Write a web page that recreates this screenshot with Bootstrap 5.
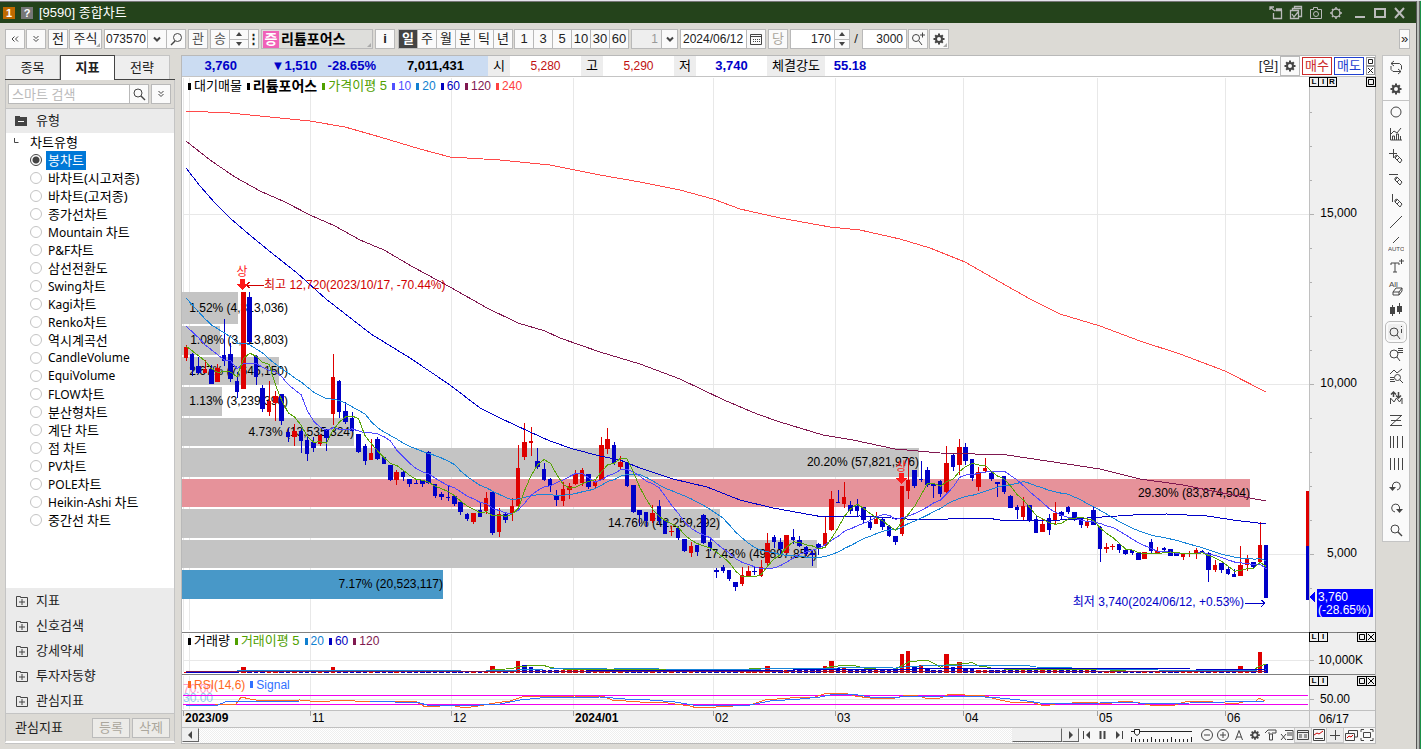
<!DOCTYPE html>
<html lang="ko">
<head>
<meta charset="utf-8">
<meta name="viewport" content="width=device-width, initial-scale=1">
<title>[9590] 종합차트</title>
<link href="https://cdn.jsdelivr.net/npm/bootstrap@5.3.0/dist/css/bootstrap.min.css" rel="stylesheet">
<style>
:root{--face:#dcdad5;--edge:#b9b9b9}
body{font-family:"Liberation Sans","Noto Sans CJK KR",sans-serif;font-size:13px;line-height:18px;color:#222;background:var(--face)}
button,input,select{font:inherit;color:inherit;border-radius:0}
svg.ico{width:16px;height:16px;fill:none;stroke:#444;stroke-width:1;display:block;flex:none}
.ico .f{fill:#444;stroke:none}
.frame{border-top:1px solid #e4e4ec;min-height:100vh;background:linear-gradient(#1a9048,#1a9048) right/1px 100% no-repeat,var(--face);padding-right:1px}
.frame-in{border-right:1px solid #666;padding-right:2px;background:#b8bcb8;min-height:calc(100vh - 1px)}
.win{border-top:1px solid #777;border-right:1px solid #555;background:var(--face);min-height:calc(100vh - 1px)}
.titlebar{background:#24431b;color:#fff;height:21px;padding:0 8px 0 3px;gap:2px}
.titlebar .num{width:12px;height:12px;font-size:11px;line-height:12px;font-weight:700;text-align:center}
.num-a{background:#c06a00}.num-b{background:#777}
.titlebar button{background:none;border:0;padding:0}
.titlebar .ico{stroke:#bbb}.titlebar .ico .f{fill:#bbb}
.toolbar{height:32px;padding:0 6px 0 5px}
.b{height:20px;min-width:20px;padding:0;border:1px solid var(--edge);background:#fafafa;display:flex;align-items:center;justify-content:center;color:#222;white-space:nowrap}
.j{margin-left:-1px}
.b.slim{min-width:0;width:11px}
.b.drop{min-width:0;width:17px;overflow:hidden}
.b.wide{width:33px}
.b.dim{color:#555}.b.off{color:#aaa69c}
.b.dark{background:#444;color:#fff;font-weight:700}
.box{height:20px;border:1px solid var(--edge);background:#fff;padding:0 3px;min-width:0}
.code{width:44px;padding:0 1px}.unit{width:31px;color:#999;background:#eee}.date{width:67px;padding:0 2px}.count{width:45px}
.g0{margin-left:1px}.g1{margin-left:2px}.g2{margin-left:3px}
.slash{width:12px;text-align:center}
.spin{width:20px;height:20px;border:1px solid var(--edge);background:#fafafa;display:flex;flex-direction:column}
.spin.small-w{width:16px}
.spin button{flex:1;border:0;padding:0;background:none;display:flex;align-items:center;justify-content:center}
.spin button+button{border-top:1px solid var(--edge)}
.up,.dn{border:3px solid transparent;width:0;height:0}
.up{border-bottom:4px solid #444;border-top:0}.dn{border-top:4px solid #444;border-bottom:0}
.name{width:112px;background:#dededb;border:1px solid var(--edge);height:20px;font-size:14px;font-weight:700;color:#000;text-align:left;padding:0 1px}
.name i{font-style:normal;background:#f062b8;color:#fff;width:16px;text-align:center;margin-right:2px;line-height:17px}
.corner{position:relative}
.corner::after{content:"";position:absolute;right:1px;bottom:1px;border:2px solid #aaa;border-left-color:transparent;border-top-color:transparent}
.per .b{width:20px}
.num12{font-size:12px}
.main{padding:0 6px 6px 5px;gap:6px}
.side{width:170px;border-bottom:1px solid #c4c4c4;flex:none}
.tabs{border-bottom:1px solid #444;height:25px;display:flex}
.tabs button{width:55px;border:1px solid #c4c4c4;border-bottom:0;border-left:0;background:#eee;height:24px;padding:0}
.tabs button:first-child{border-left:1px solid #c4c4c4}
.tabs .on{background:#fff;border:1px solid #444;border-bottom:0;height:25px;font-weight:700}
.search{height:28px;padding:4px 2px;border:solid #c4c4c4;border-width:0 1px}
.search input{width:122px}
.search input::placeholder{color:#bbb;opacity:1}
.tree{border:1px solid #c4c4c4;border-bottom:0;background:#fff;flex:1}
.head{background:#ebebeb;height:25px;padding-left:8px;gap:6px;display:flex;align-items:center}
.tree .head{height:24px}
button.head{border:0;width:100%;text-align:left}
.folders{background:#ebebeb;border:solid #c4c4c4;border-width:0 1px}
.row18{height:18px;display:flex;align-items:center;font-family:"Noto Sans","Noto Sans CJK KR",sans-serif;font-size:12px;color:#000}
.row18 .ko{font-size:13px}
.row18 label{padding:0 2px;line-height:18px;white-space:nowrap}
.row18 input{appearance:none;width:12px;height:12px;border:1px solid #c4c4c4;border-radius:50%;margin:0 4px 0 24px;flex:none}
.row18 input:checked{border-color:#444;background:radial-gradient(#444 0 3px,#fff 4px)}
.row18 input:checked+label{background:#0078d7;color:#fff}
.foot{height:30px;background:var(--face);border:1px solid #c4c4c4;border-bottom:2px solid #fff;padding:0 4px 0 9px;gap:2px}
.foot button{width:38px;height:20px;color:#aaa69c;border:1px solid #bbb;background:#ecebe8;padding:0}
.panel{border:1px solid var(--edge);min-width:0}
.quote{height:21px;border-bottom:1px solid #c4c4c4;background:#fff;white-space:nowrap}
.quote>*{height:20px;line-height:20px;text-align:center}
.quote b{font-size:13px}
.qb{background:#cbdcf2;width:306px;color:#0000c8}
.qb b{text-align:right}
.q1{width:55px}.q2{width:80px}.q3{width:59px}.q4{width:88px;color:#000}
.ql{background:#ededed;width:22px;color:#000}.qv{width:71px;font-size:12px;color:#c01010}
.ql.long{width:58px}.down{color:#0000c8}.power{width:50px}
.quote .trade{height:18px;line-height:16px;width:30px;border:1px solid;background:#fff;padding:0}
.buy{color:#cc2a2a}.sell{color:#1f3fd0}
.tiny{width:9px;height:9px;border:1px solid #999;padding:0;background:#fff;display:block}
.tiny svg{display:block;width:7px;height:7px;fill:none;stroke:#222}
.plot{position:relative;background:#fff}
.plot>svg{display:block;width:100%;height:auto}
.plot text{font-size:12px}
.legend{position:absolute;left:6px;display:flex;gap:5px;align-items:center;line-height:18px;white-space:nowrap}
.legend span{display:flex;align-items:center;gap:3px;font-size:12px}
.legend .ko{font-size:13px}
.legend .stock{font-size:14px;font-weight:700}
.legend span::before{content:"";width:3px;height:7px;background:currentColor}
.m5{color:#50a000}.m10{color:#5050ff}.m20{color:#1080d0}.m60{color:#0000c0}.m120{color:#801850}.m240{color:#ff4040}.rsi{color:#ff6820}.sig{color:#3070ff}
.keys{position:absolute;display:flex;right:0;width:66px}
.keys button{width:10px;height:10px;border:1px solid #000;background:#efefef;padding:0;margin-right:-1px;font-size:8px;line-height:8px;font-weight:700;color:#000;display:flex;justify-content:center}
.keys button svg{width:8px;height:8px;fill:none;stroke:#000}
.keys .last{margin-left:auto}
.k1{top:0}.k2{top:85.300%}.k3{top:92%}
.scroll{height:15px;background:#f7f7f7}
.raised{border:1px solid;border-color:#eee #666 #666 #eee;background:#efefef;height:14px;padding:0;overflow:hidden}
.arrow{width:17px}.thumb{width:50px}
.track{background:repeating-conic-gradient(#eee 0 25%,#fff 0 50%) 0 0/2px 2px}
.btm .ico{width:16px;height:14px}
.btm button{padding:0;border:0;background:none;width:16px;height:14px}
.btm button.on{outline:1px solid #c8c8c8;background:#ececec}
.rail{width:28px;border:1px solid #c4c4c4;background:#fafafa;align-self:flex-start;flex:none}
.rail button{width:100%;height:22px;border:0;background:none;padding:0;display:flex;align-items:center;justify-content:center}
.rail button.on .ico{outline:1px solid #bbb;outline-offset:2px;border-radius:2px;background:#eee}
.rail button.sep{height:23px;border-bottom:1px solid #c4c4c4}
</style>
<script src="https://cdn.jsdelivr.net/npm/bootstrap@5.3.0/dist/js/bootstrap.bundle.min.js"></script>
</head>
<body>
<svg width="0" height="0" class="position-absolute" aria-hidden="true">
<symbol id="gear" viewBox="0 0 16 16"><circle cx="8" cy="8" r="3" stroke-width="2"/><path stroke-width="2" d="M8 2.500v2M8 11.500v2M2.500 8h2M11.500 8h2M4.200 4.200l1.400 1.400M10.400 10.400l1.400 1.400M11.800 4.200l-1.400 1.400M5.600 10.400l-1.400 1.400"/></symbol>
<symbol id="mag" viewBox="0 0 16 16"><circle cx="7" cy="7" r="4"/><path d="M10 10l4 4" stroke-width="1.500"/></symbol>
<symbol id="pen" viewBox="0 0 16 16"><path d="M7 8l2-1 5 5-2 3-5-5zM7 10l3-3M9 12l3-3"/></symbol>
<symbol id="fold" viewBox="0 0 16 16"><path d="M2.500 3.500h4v1h7v9h-11zM5 9h6M8 6v6"/></symbol>
<symbol id="dd" viewBox="0 0 16 16"><path d="M5.500 5L8 7.500 10.500 5M5.500 8L8 10.500 10.500 8"/></symbol>
<symbol id="chev" viewBox="0 0 16 16"><path d="M5 6.500l3 3 3-3" stroke-width="2"/></symbol>
</svg>
<div class="frame"><div class="frame-in"><div class="win d-flex flex-column">
<header class="titlebar d-flex align-items-center">
 <span class="num num-a">1</span><span class="num num-b ms-1">?</span><span class="ms-1">[9590] 종합차트</span>
 <div class="ms-auto d-flex gap-1">
 <button aria-label="분리"><svg class="ico" viewBox="0 0 16 16"><path d="M2 2l5 4M2 5V2h4M5.500 8v5.500h8v-8h-6M8 4h6" stroke-width="1.300"/></svg></button>
 <button aria-label="복사"><svg class="ico" viewBox="0 0 16 16"><path d="M2.500 5.500h8v8h-8zM4.500 5V3.500h9v8H11M6.500 3V1.500h7V4M4 9l2 3 4-5" stroke-width="1.300"/></svg></button>
 <button aria-label="캡처"><svg class="ico" viewBox="0 0 16 16"><path d="M2.500 4.500h3v-2h4v2h4v9h-11z"/><circle cx="8" cy="9" r="2.500"/></svg></button>
 <button class="me-1" aria-label="설정"><svg class="ico" viewBox="0 0 16 16"><circle cx="8" cy="8" r="4" stroke-width="1.500"/><path stroke-width="1.500" d="M8 2v2M8 12v2M2 8h2M12 8h2M4 4l1 1M11 11l1 1M12 4l-1 1M5 11l-1 1"/></svg></button>
 <button aria-label="최소화"><svg class="ico" viewBox="0 0 16 16"><path d="M3 12h10" stroke-width="2"/></svg></button>
 <button aria-label="최대화"><svg class="ico" viewBox="0 0 16 16"><path d="M3 4h10v8H3z" stroke-width="2"/></svg></button>
 <button aria-label="닫기"><svg class="ico" viewBox="0 0 16 16"><path d="M3 3l9 10M12 3L3 13" stroke-width="2"/></svg></button>
 </div>
</header>
<div class="toolbar d-flex align-items-center">
 <button class="b" aria-label="이전"><svg class="ico" viewBox="0 0 16 16"><path d="M7.500 5.500L5 8l2.500 2.500M11 5.500L8.500 8l2.500 2.500"/></svg></button>
 <button class="b g0" aria-label="펼치기"><svg class="ico"><use href="#dd"/></svg></button>
 <button class="b g1">전</button>
 <button class="b g0 corner wide">주식</button>
 <input class="box g1 num12 code" value="073570" aria-label="종목코드"><button class="b j" aria-label="목록"><svg class="ico"><use href="#chev"/></svg></button><button class="b j" aria-label="검색"><svg class="ico" viewBox="0 0 16 16"><circle cx="9.500" cy="6.500" r="4"/><path d="M7 10l-4 4" stroke-width="1.500"/></svg></button>
 <button class="b g1 dim">관</button>
 <button class="b g1 dim">송</button>
 <div class="spin j"><button aria-label="이전 종목"><i class="up"></i></button><button aria-label="다음 종목"><i class="dn"></i></button></div>
 <button class="b j slim fw-bold">⋮</button>
 <button class="name d-flex align-items-center g1 corner"><i>증</i>리튬포어스</button>
 <button class="b g1 fw-bold">i</button>
 <div class="per d-flex g2"><button class="b dark">일</button><button class="b j">주</button><button class="b j">월</button><button class="b j">분</button><button class="b j">틱</button><button class="b j">년</button></div>
 <div class="per d-flex g0"><button class="b">1</button><button class="b j">3</button><button class="b j">5</button><button class="b j">10</button><button class="b j">30</button><button class="b j">60</button></div>
 <input class="box g1 text-end num12 unit" value="1" aria-label="주기"><button class="b j drop" aria-label="주기 선택"><svg class="ico"><use href="#chev"/></svg></button>
 <input class="box g1 num12 date" value="2024/06/12" aria-label="날짜"><button class="b j" aria-label="달력"><svg class="ico" viewBox="0 0 16 16"><path d="M2.500 3.500h11v10h-11zM3 5.500h10"/><path stroke-dasharray="1 1" d="M5 8.500h7M5 10.500h7"/></svg></button>
 <button class="b g1 off">당</button>
 <input class="box g1 text-end num12 count" value="170" aria-label="표시 봉수"><div class="spin small-w j"><button aria-label="늘리기"><i class="up"></i></button><button aria-label="줄이기"><i class="dn"></i></button></div>
 <span class="slash">/</span>
 <input class="box text-end num12 count" value="3000" aria-label="전체 봉수">
 <button class="b g0" aria-label="확대"><svg class="ico" viewBox="0 0 16 16"><circle cx="6" cy="7" r="3.500"/><path d="M9 10l3 4M10 4h5M12.500 1.500v5"/></svg></button>
 <button class="b g0 corner" aria-label="설정"><svg class="ico"><use href="#gear"/></svg></button>
 <button class="b ms-auto slim" aria-label="더 보기">»</button>
</div>
<main class="main d-flex flex-grow-1">
 <aside class="side d-flex flex-column">
  <div class="tabs"><button>종목</button><button class="on">지표</button><button>전략</button></div>
  <div class="search d-flex"><input class="box" placeholder="스마트 검색" aria-label="스마트 검색"><button class="b j" aria-label="검색"><svg class="ico"><use href="#mag"/></svg></button><button class="b g1" aria-label="펼치기"><svg class="ico"><use href="#dd"/></svg></button></div>
  <div class="tree">
   <button class="head"><svg class="ico" viewBox="0 0 16 16"><path class="f" d="M1 3h5v1h7v9H1z"/><path d="M4 8.500h6" stroke="#fff"/></svg>유형</button>
   <div class="row18"><svg class="ico" viewBox="0 0 16 16"><path d="M8.500 4v4.500h4"/></svg><span class="ko ms-2">차트유형</span></div>
   <div id="types"></div>
  </div>
  <div id="folders" class="folders"></div>
  <div class="foot d-flex align-items-center"><span class="me-auto">관심지표</span><button disabled>등록</button><button disabled>삭제</button></div>
 </aside>
 <section class="panel flex-grow-1">
  <div class="quote d-flex align-items-center">
   <div class="qb d-flex"><b class="q1">3,760</b><b class="q2">▼1,510</b><b class="q3">-28.65%</b><b class="q4">7,011,431</b></div>
   <span class="ql">시</span><span class="qv">5,280</span><span class="ql">고</span><span class="qv">5,290</span><span class="ql">저</span><b class="qv down">3,740</b><span class="ql long">체결강도</span><b class="down power">55.18</b>
   <div class="ms-auto d-flex align-items-center" style="gap:2px"><span>[일]</span><button class="b" aria-label="설정"><svg class="ico"><use href="#gear"/></svg></button><button class="trade buy">매수</button><button class="trade sell">매도</button><div><button class="tiny" aria-label="최대화"><svg viewBox="0 0 7 7"><path d="M1.500 1.500h4v4h-4z"/></svg></button><button class="tiny" aria-label="닫기"><svg viewBox="0 0 7 7"><path d="M1 1l5 5M6 1L1 6"/></svg></button></div></div>
  </div>
  <div class="plot">
   <svg id="chart" viewBox="182 77 1193 651" shape-rendering="crispEdges" role="img" aria-label="리튬포어스 일봉 차트"></svg>
   <div class="legend k1"><span class="ko text-black">대기매물</span><span class="stock text-black">리튬포어스</span><span class="ko m5">가격이평 5</span><span class="m10">10</span><span class="m20">20</span><span class="m60">60</span><span class="m120">120</span><span class="m240">240</span></div>
   <div class="legend k2"><span class="ko text-black">거래량</span><span class="ko m5">거래이평 5</span><span class="m20">20</span><span class="m60">60</span><span class="m120">120</span></div>
   <div class="legend k3"><span class="rsi">RSI(14,6)</span><span class="sig">Signal</span></div>
   <div class="keys k1"><button>L</button><button>I</button><button>R</button><button class="last" aria-label="최대화"><svg viewBox="0 0 8 8"><path d="M1.500 1.500h5v5h-5z"/></svg></button></div>
   <div class="keys k2"><button>L</button><button>I</button><button class="last" aria-label="최대화"><svg viewBox="0 0 8 8"><path d="M1.500 1.500h5v5h-5z"/></svg></button><button aria-label="닫기"><svg viewBox="0 0 8 8"><path d="M1 1l6 6M7 1L1 7"/></svg></button></div>
   <div class="keys k3"><button>L</button><button>I</button><button class="last" aria-label="최대화"><svg viewBox="0 0 8 8"><path d="M1.500 1.500h5v5h-5z"/></svg></button><button aria-label="닫기"><svg viewBox="0 0 8 8"><path d="M1 1l6 6M7 1L1 7"/></svg></button></div>
  </div>
  <div class="scroll d-flex">
   <button class="raised arrow" aria-label="왼쪽"><svg class="ico" viewBox="0 0 16 16"><path class="f" d="M9 2v8L5 6z"/></svg></button>
   <div class="track flex-grow-1 d-flex justify-content-end"><div class="raised thumb"></div></div>
   <button class="raised arrow" aria-label="오른쪽"><svg class="ico" viewBox="0 0 16 16"><path class="f" d="M6 2v8l4-4z"/></svg></button>
   <div class="btm d-flex" id="btm"></div>
  </div>
 </section>
 <nav class="rail" id="rail" aria-label="그리기 도구"></nav>
</main>
</div></div></div>
<script>
const $=id=>document.getElementById(id);
$('types').innerHTML=['봉차트','바차트(시고저종)','바차트(고저종)','종가선차트','Mountain 차트','P&amp;F차트','삼선전환도','Swing차트','Kagi차트','Renko차트','역시계곡선','CandleVolume','EquiVolume','FLOW차트','분산형차트','계단 차트','점 차트','PV차트','POLE차트','Heikin-Ashi 차트','중간선 차트']
 .map((t,i)=>`<div class="row18"><input type="radio" name="type" id="t${i}"${i?'':' checked'}><label for="t${i}">${t.replace(/[가-힣()]+/g,'<span class="ko">$&</span>')}</label></div>`).join('');
$('folders').innerHTML=['지표','신호검색','강세약세','투자자동향','관심지표'].map(t=>`<button class="head"><svg class="ico"><use href="#fold"/></svg>${t}</button>`).join('');

const ic=(d,vb='0 0 16 16')=>`<svg class="ico" viewBox="${vb}">${d}</svg>`;
const p=d=>`<path d="${d}"/>`, pen='<use href="#pen"/>', mg='<use href="#mag"/>';
const rail=[
 ['종목 전환',p('M3 4.500h8.500l2 2v4M6 2L3 4.500 6 7M13 12.500H5l-2-2V7M10 10l3 2.500-3 2.500')],
 ['설정','<use href="#gear"/>','sep'],
 ['원','<circle cx="8" cy="8" r="5"/>'],
 ['지표',p('M2.500 2v12H14M4.500 14v-4h2v4M8.500 14V8h2v6M12.500 14v-4M3 8l3-3 3 2 4-5')],
 ['십자선',pen+p('M5.500 1v9M1 5.500h8')],
 ['수평선',pen+p('M1 4.500h9')],
 ['수직선',pen+p('M4.500 2v8')],
 ['추세선',p('M2 14L14 2')],
 ['자동 추세선',p('M5 7L11 1')+'<text x="0" y="15" fill="#444" stroke="none" font-size="6">AUTO</text>'],
 ['문자','<path d="M3 5h8v2M3 7V5M7 5v9M5 14h4M11 3h5M13.500 1v5"/>'],
 ['모두 지우기','<text x="1" y="7" fill="#444" stroke="none" font-size="8">All</text>'+p('M5 12l3-4h6l-3 4v3H5zM5 12h6M14 8v3l-3 4')],
 ['봉',p('M4.500 3v11M11.500 1v11')+'<path class="f" d="M2 5h5v7H2zM9 4h5v6H9z"/>'],
 ['정보 조회','<circle cx="6" cy="8" r="4"/>'+p('M9 11l3 4M13.500 5v4M13.500 2v1'),'on'],
 ['목록 조회','<circle cx="6" cy="8" r="4"/>'+p('M9 11l3 4M10 2.500h5M10 4.500h5M10 6.500h5')],
 ['차트 조회',p('M2 6l4-4 3 3 5-4M2 9.500h4M2 11.500h4M2 13.500h5')+'<circle cx="9.500" cy="9.500" r="3"/>'+p('M12 12l3 3')],
 ['고저',p('M2.500 14V8l3.500 4 2.500-4 3 4 2.500-4v6')+'<path stroke-width="1.500" d="M5.500 7V2M3 4.500L5.500 2 8 4.500M10.500 2v6M8 5.500L10.500 8 13 5.500"/>'],
 ['파동',p('M2 3.500h12M3 8.500h10M2 13.500h12M13 4L3 13')],
 ['시간대 1',p('M2.500 2v12M5.500 2v12M9.500 2v12M14.500 2v12')],
 ['시간대 2',p('M2.500 2v12M6.500 2v12M10.500 2v12M14.500 2v12')],
 ['되돌리기',p('M4.500 10.500V7A4 4 0 1 1 9 12')+'<path class="f" d="M1 9h7l-3.500 4z"/>'],
 ['다시 실행',p('M7 12a4 4 0 1 1 4.500-5v3')+'<path class="f" d="M8 9h7l-3.500 4z"/>'],
 ['확대',mg]];
$('rail').innerHTML=rail.map(r=>`<button aria-label="${r[0]}" class="${r[2]||''}">${ic(r[1])}</button>`).join('');
const ctl=[['처음',p('M4.500 3v8')+'<path class="f" d="M11 3v8L7 7z"/>'],['정지','<path d="M5.500 3v8M9.500 3v8" stroke-width="2"/>'],['끝',p('M11.500 3v8')+'<path class="f" d="M5 3v8l4-4z"/>']];
const tools=[['축소','<circle cx="8" cy="7" r="5.500"/>'+p('M5 7h6')],['확대','<circle cx="8" cy="7" r="5.500"/>'+p('M5 7h6M8 4v6')],['글자',p('M4.500 12L8 2.500l3.500 9.500M6 9h4')],['설정','<use href="#gear" height="14"/>'],['도구',p('M2 5l3-3h8v3H9M5 5h2M6.500 6h3v6h-3z')],['엑셀',p('M6 2.500h8v9H8M8 5h5M8 7h5M2 6l5 6M7 6l-5 6')],['표',p('M2.500 2.500h11v9h-11zM3 4.500h10M4 7h3M4 9h3M9 7h3M9 9h3'),'on'],['차트',p('M2.500 1.500h11v11h-11zM4 10.500h8')+'<path stroke="#c00" d="M3 7l3-2 2 1 4-3"/>'],['십자',p('M8.500 2v10M3 7.500h10'),'on'],['겹침',p('M5.500 5V2.500h9V9H12M2.500 5.500h9v7h-9z')+'<path stroke="#c00" d="M4 10l2-2 2 1 2-2"/>'],['전체',p('M2 4V1.500h3M11 1.500h3V4M14 10v2.500h-3M5 12.500H2V10M4.500 4.500h7v5h-7z')]];
const bt=a=>a.map(r=>`<button aria-label="${r[0]}" class="${r[2]||''}">${ic(r[1],'0 0 16 14')}</button>`).join('');
let ruler='<svg class="d-block" viewBox="0 0 64 14" width="64" height="14" fill="none" stroke="#222"><path d="M0 3.500h61"/><path d="M3.500 1.500h5v4l-2.500 2-2.500-2z" fill="#fff"/>';
for(let i=0;i<16;i++)ruler+=`<path d="M${i*4+.5} ${i%5?11:9}v5"/>`;
$('btm').innerHTML=bt(ctl)+'<span class="mx-1">'+ruler+'</svg></span>'+bt(tools);

/* candles: direction, high, body top, body bottom, low (chart units) */
const C=`R345,347,358,361 B353,354,370,376 B357,366,373,374 R360,369,373,373 B365,369,384,384 R364,368,382,382 B319,355,361,366 B343,354,379,382 B372,381,392,398 R292,292,389,389 B292,297,342,344 B355,356,377,385 B385,388,409,412 R381,401,412,416 R391,396,403,421 B394,394,421,425 B428,432,437,442 R424,431,437,446 B429,431,441,453 B437,440,454,461 B437,442,448,452 R434,435,444,446 B429,429,438,451 R354,377,414,425 B380,381,412,418 B402,411,422,424 B412,418,431,432 B434,434,452,453 B444,446,461,465 R439,453,460,460 B437,439,459,460 B457,457,464,464 B465,465,480,481 R470,472,480,485 B471,472,477,481 B479,479,484,487 B479,483,484,484 B480,480,484,487 B451,452,483,484 B484,484,496,498 B492,494,497,500 B485,497,498,501 B496,496,504,506 B500,502,512,515 B513,514,519,521 R513,513,522,524 B502,510,517,517 R492,498,511,514 B492,492,533,535 R508,514,532,537 B513,514,520,523 R498,506,513,521 R445,468,506,506 R423,442,457,460 R427,441,443,456 B448,461,467,469 B463,469,480,481 B478,479,486,492 B490,496,500,506 R482,489,501,506 R483,486,490,499 R470,474,484,485 R468,470,483,486 B474,474,487,489 R480,482,486,489 R437,445,480,480 R428,439,449,454 B442,445,463,465 R456,462,467,470 B462,463,486,487 B485,485,512,513 B510,510,515,526 B512,512,521,527 R505,513,521,523 B500,506,521,525 B520,520,534,534 R526,531,532,536 B526,528,538,540 B539,539,551,552 R542,546,553,557 B545,545,552,556 B514,515,543,544 B538,542,548,551 B568,570,572,578 B565,567,571,573 B570,570,579,581 B582,582,587,591 R567,575,584,586 R566,571,576,576 B567,571,572,575 R560,567,576,577 R533,543,563,567 B535,537,542,548 B538,542,549,554 R535,535,553,553 B529,537,540,544 B536,540,546,547 B546,547,554,556 B550,553,555,566 B543,544,549,555 R516,533,545,546 R491,499,530,531 B490,502,503,503 R482,497,504,508 B501,505,511,514 B499,506,511,517 B507,507,520,524 B517,522,528,530 R512,519,524,524 B518,519,527,530 B525,526,536,537 B536,536,542,545 R486,486,534,536 R458,480,491,499 B470,470,486,488 B461,479,480,482 B467,470,485,487 B483,484,486,498 B480,481,494,497 R446,463,492,495 B454,455,467,471 R439,447,465,475 B443,447,461,465 B459,459,478,481 R467,472,487,491 R458,468,471,472 B472,473,479,481 B482,482,484,497 B476,476,492,494 B495,496,508,508 B505,507,510,519 R497,506,517,520 B505,505,521,522 B515,519,533,533 R518,524,532,532 B514,518,530,535 R502,513,520,524 B511,512,516,520 B506,507,512,514 B512,512,520,521 B517,518,525,528 R519,521,526,528 B506,510,525,525 B526,527,549,562 R543,547,549,553 R544,546,547,550 B543,544,550,553 B550,550,554,555 B550,550,553,555 B553,553,560,560 R552,552,559,559 B539,542,551,553 R547,551,553,554 B547,548,550,553 B549,549,556,556 B553,553,556,556 R553,553,557,560 R551,553,554,557 R548,550,554,559 B550,551,552,553 B552,553,570,582 R560,565,570,572 B563,563,570,573 B566,569,574,575 B569,574,577,577 R546,565,576,576 R555,558,565,571 B562,562,567,569 R522,545,562,563 B545,545,598,598`
 .split(' ').map(s=>[s[0]==='R',...s.slice(1).split(',').map(Number)]);
const RED='#de0000',BLUE='#0000c8',step=6.393,X=i=>186+i*step;
const L=i=>Math.floor(184+i*step),W=i=>Math.floor(188.5+i*step)-L(i);
const rect=(x,y,w,h,f)=>`<rect x="${x}" y="${y}" width="${w}" height="${h}" fill="${f}"/>`;
const line=(pts,c)=>`<polyline points="${pts}" fill="none" stroke="${c}"/>`;
const txt=(x,y,t,f='#000',a='start',e='')=>`<text x="${x}" y="${y}" fill="${f}" text-anchor="${a}" ${e}>${t}</text>`;
const avg=(v,n,pre=[])=>v.map((_,i)=>{if(i<pre.length)return pre[i];const s=v.slice(Math.max(0,i-n+1),i+1);return s.reduce((a,b)=>a+b)/s.length});
const path=v=>v.map((y,i)=>`${X(i).toFixed(1)},${y.toFixed(1)}`).join(' ');
let o='';
const G='#e8e8e8';
for(const x of [183,189,310,451,573,713,835,963,1097,1225])o+=rect(x,78,1,552,G)+rect(x,634,1,38,G)+rect(x,676,1,33,G);
for(const y of [214,384,554,660,699])o+=rect(183,y,1126,1,G);
[[292,32,238,'1.52% (4,313,036)',288],[326,29,220,'1.08% (3,113,803)',288],[357,28,279,'2.67% (7,645,150)',288],[387,29,222,'1.13% (3,239,390)',288],[418,28,354,'4.73% (13,535,324)',354],[448,29,919,'20.20% (57,821,976)',919],[479,28,1250,'29.30% (83,874,504)',1250],[509,29,720,'14.76% (42,259,292)',720],[540,28,817,'17.43% (49,897,852)',817],[570,29,443,'7.17% (20,523,117)',443]]
 .forEach(([y,h,r,t,e],i)=>{o+=rect(182,y,r-182,h,i===6?'#e6929a':i===9?'#4898c8':'#c4c4c4')+txt(e,y+Math.floor(h/2)+4,t,'#000','end')});
C.forEach((c,i)=>{const f=c[0]?RED:BLUE;o+=rect(L(i)+2,c[1],1,c[4]-c[1],f)+rect(L(i),c[2],W(i),Math.max(1,c[3]-c[2]),f)});
const close=C.map(c=>c[0]?c[2]:c[3]);
o+=line('186,111 230,113 270,117 310,121 345,127 380,137 420,149 450,157 500,160 550,165 600,175 640,182 680,190 713,199 740,209 780,218 830,227 860,230 900,239 930,248 965,262 1000,282 1030,299 1060,314 1100,326 1140,341 1180,354 1225,371 1266,392','#ff4a4a');
o+=line('186,141 210,160 235,177 260,191 285,202 310,215 335,226 360,240 384,250 413,267 450,287 487,308 518,323 545,331 560,338 600,352 640,364 680,379 724,400 757,414 780,422 823,435 853,440 895,449 918,451 940,453 975,454 1007,455 1067,464 1100,469 1140,479 1183,485 1217,492 1266,501','#801850');
o+=line('186,168 200,186 215,203 230,218 245,231 268,250 297,273 326,299 371,334 410,358 450,385 480,408 500,418 530,432 550,441 573,449 600,456 620,460 640,468 673,479 707,487 740,500 773,508 823,517 860,516 907,519 933,520 963,518 987,518 1000,520 1060,520 1087,518 1133,515 1167,514 1207,516 1233,520 1266,524','#0000c8');
o+=line(path(avg(close,20,[298,305,312,319,325,329,333,337,343,343,345,349,353,359,364,369,373,378,382])),'#1884d8');
o+=line(path(avg(close,10,[326,332,338,345,350,355,360,361,369])),'#5048ff');
o+=line(path(avg(close,5,[346,351,356,361])),'#58a408');
const arrow=(x,y)=>`<path d="M${x-2} ${y}h5v5h3l-5 6h-1l-5-6h3z" fill="#ff1818"/>`;
o+=txt(242,276,'상','#ff1818','middle')+txt(901,471,'상','#ff1818','middle');
o+=line('264,285 245,285','#d00000')+line('250,282 246,285 250,288','#d00000')+txt(264,289,'최고 12,720(2023/10/17, -70.44%)','#d00000');
o+=arrow(242,279)+arrow(901,473);
o+=txt(1244,606,'최저 3,740(2024/06/12, +0.53%)','#0000c8','end')+line('1245,603 1265,603','#0000c8')+line('1261,600 1265,603 1261,607','#0000c8');
/* volume pane */
const big={9:[667,1],23:[667,1],48:[666,1],51:[670,1],52:[661,1],53:[665,0],54:[667,0],89:[669,1],91:[666,1],100:[666,1],101:[661,1],102:[668,0],103:[667,1],112:[654,1],113:[651,1],114:[667,0],115:[665,1],116:[669,0],119:[654,1],120:[667,0],121:[662,1],122:[668,0],123:[668,0],158:[670,1],165:[666,1],168:[652,1],169:[664,0]};
const vol=C.map((c,i)=>big[i]?big[i][0]:i<48?672:i<143?670:672);
vol.forEach((y,i)=>{o+=rect(L(i),y,W(i),673-y,(big[i]?big[i][1]:C[i][0])?RED:BLUE)});
o+=line(path(avg(vol,5).map(y=>y-1)),'#58a408')+line(path(avg(vol,20).map(y=>y-1)),'#1884d8')+line(path(avg(vol,60)),'#0000c8')+line('186,671.5 1266,671.5','#801850');
/* RSI pane */
o+=txt(183,693,'70.00','#ff9ac8')+txt(183,702,'30.00','#90c8f0')+rect(183,695,1125,1,'#f000f0')+rect(183,704,1125,1,'#f000f0');
o+=line('186,705 215,705 236,704 241,697 250,699 262,701 300,700 320,702 340,700 370,702 400,701 417,702 425,707 440,706 450,705 465,708 484,705 495,703 510,701 525,696 535,697 575,696 605,697 612,700 640,702 660,702 675,704 690,706 697,708 716,707 750,705 765,700 790,698 815,697 827,693 845,693 855,696 870,698 895,698 903,696 915,695 925,698 940,698 950,694 965,695 985,696 1000,700 1010,702 1030,702 1045,706 1055,704 1090,702 1105,704 1125,701 1140,703 1155,706 1175,705 1188,701 1200,701 1225,703 1235,704 1247,701 1255,702 1259,698 1265,701','#ff6820');
o+=line('186,705 218,705 225,702 300,701 370,701 420,703 427,705 455,706 480,705 500,704 520,700 540,698 600,697 625,699 650,700 675,702 693,705 750,705 770,701 800,699 820,697 835,694 852,694 870,697 900,697 915,696 940,697 970,696 1000,698 1020,700 1047,704 1100,703 1125,702 1150,704 1190,703 1225,702 1265,701','#3070ff');
/* axes */
o+=rect(1306,491,3,55,RED)+rect(1306,546,3,54,BLUE)+rect(1310,77,65,634,'#efefef')+rect(182,711,1193,17,'#efefef');
o+=rect(1309,77,1,651,'#c0c0c0')+rect(182,710,1193,1,'#c0c0c0')+rect(182,727,1193,1,'#c0c0c0')+rect(182,632,1193,1,'#808080')+rect(182,674,1193,1,'#808080');
for(let k=-3;k<12;k++)o+=rect(1310,214+k*34,k%5?2:4,1,'#b0b0b0');
o+=rect(1310,660,4,1,'#b0b0b0')+rect(1310,699,4,1,'#b0b0b0');
o+=txt(1357,217,'15,000','#000','end')+txt(1357,387,'10,000','#000','end')+txt(1357,557,'5,000','#000','end')+txt(1363,664,'10,000K','#000','end')+txt(1320,703,'50.00')+txt(1319,723,'06/17');
o+='<path d="M1309 597l6-5v11z" fill="#00f"/>'+rect(1317,589,56,28,'#00f')+txt(1318,601,'3,760','#fff')+txt(1318,614,'(-28.65%)','#fff');
[[183,'2023/09',1],[310,'11'],[451,'12'],[573,'2024/01',1],[713,'02'],[835,'03'],[963,'04'],[1097,'05'],[1225,'06']].forEach(([x,t,b])=>o+=rect(x,711,1,5,'#a0a0a0')+txt(x+2,722,t,'#000','start',b?'font-weight="bold"':''));
$('chart').innerHTML=o;
</script>
</body>
</html>
